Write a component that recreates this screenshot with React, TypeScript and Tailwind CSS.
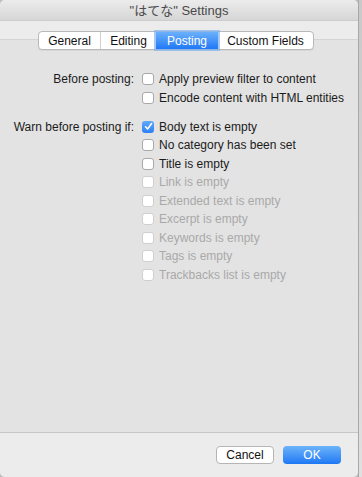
import React from "react";

const font = { fontFamily: '"Liberation Sans", Arial, "Noto Sans CJK JP", sans-serif' };

function Check({ checked, disabled }: { checked?: boolean; disabled?: boolean }) {
  if (checked) {
    return (
      <div className="w-[12px] h-[12px] rounded-[3px] bg-gradient-to-b from-[#5fa8fb] to-[#2c7ff5] flex items-center justify-center shrink-0">
        <svg width="9" height="9" viewBox="0 0 9 9">
          <path d="M1.5 4.8 L3.6 7 L7.6 1.6" stroke="white" strokeWidth="1.6" fill="none" strokeLinecap="round" strokeLinejoin="round" />
        </svg>
      </div>
    );
  }
  return (
    <div
      className={
        "w-[12px] h-[12px] rounded-[3px] bg-white shrink-0 border " +
        (disabled ? "border-[#cfcfcf] bg-[#f4f4f4]" : "border-[#a9a9a9]")
      }
    />
  );
}

function Row({ label, checked, disabled }: { label: string; checked?: boolean; disabled?: boolean }) {
  return (
    <div className="h-[18.5px] flex items-center gap-[5px]">
      <Check checked={checked} disabled={disabled} />
      <span className={disabled ? "text-[#a9a9a9]" : "text-[#1b1b1b]"}>{label}</span>
    </div>
  );
}

export default function App() {
  return (
    <div className="w-[362px] h-[477px] flex bg-[#bdbdbd] text-[12px]" style={font}>
      <div className="w-[358px] h-[477px] flex flex-col rounded-t-[5px] rounded-b-[5px] overflow-hidden bg-[#e3e3e3]">
        <div className="h-[21px] pt-[2px] bg-gradient-to-b from-[#ececec] to-[#d6d6d6] border-b border-[#cdcdcd] flex items-center justify-center text-[13px] text-[#4a4a4a]">
          "はてな" Settings
        </div>
        <div className="relative h-[19px] bg-[#ececec] border-b border-[#d4d4d4]">
          <div className="absolute left-[38px] top-[10px] flex h-[19px] rounded-[4px] border border-[#b9b9b9] bg-white text-[12px] text-[#111] shadow-[0_1px_0_rgba(0,0,0,0.05)]">
            <div className="w-[62px] flex items-center justify-center border-r border-[#d2d2d2]">General</div>
            <div className="w-[55px] flex items-center justify-center">Editing</div>
            <div className="relative w-[62px] flex items-center justify-center text-white bg-gradient-to-b from-[#6bb0fb] to-[#1f78f5] outline outline-[2px] outline-[#7fb4f5]/70">
              Posting
            </div>
            <div className="w-[95px] flex items-center justify-center">Custom Fields</div>
          </div>
        </div>
        <div className="flex-1 pt-[30px]">
          <div className="flex">
            <div className="w-[134px] text-right text-[#1b1b1b] h-[18.5px] leading-[18.5px]">Before posting:</div>
            <div className="ml-[8px] flex flex-col">
              <Row label="Apply preview filter to content" />
              <Row label="Encode content with HTML entities" />
            </div>
          </div>
          <div className="flex mt-[10.5px]">
            <div className="w-[134px] text-right text-[#1b1b1b] h-[18.5px] leading-[18.5px]">Warn before posting if:</div>
            <div className="ml-[8px] flex flex-col">
              <Row label="Body text is empty" checked />
              <Row label="No category has been set" />
              <Row label="Title is empty" />
              <Row label="Link is empty" disabled />
              <Row label="Extended text is empty" disabled />
              <Row label="Excerpt is empty" disabled />
              <Row label="Keywords is empty" disabled />
              <Row label="Tags is empty" disabled />
              <Row label="Trackbacks list is empty" disabled />
            </div>
          </div>
        </div>
        <div className="h-[45px] bg-[#ececec] border-t border-[#c6c6c6] flex items-start justify-end pt-[13px] pr-[17px] gap-[9px]">
          <div className="w-[58px] h-[18px] rounded-[4px] bg-white border border-[#b5b5b5] flex items-center justify-center text-[12px] text-[#111]">
            Cancel
          </div>
          <div className="w-[58px] h-[18px] rounded-[4px] bg-gradient-to-b from-[#6cb3fa] to-[#1d77f4] flex items-center justify-center text-[12px] text-white">
            OK
          </div>
        </div>
      </div>
      <div className="w-[4px] h-[477px] bg-gradient-to-b from-[#c9c9c9] to-[#e0e0e0] border-l border-[#a8a8a8]" />
    </div>
  );
}
